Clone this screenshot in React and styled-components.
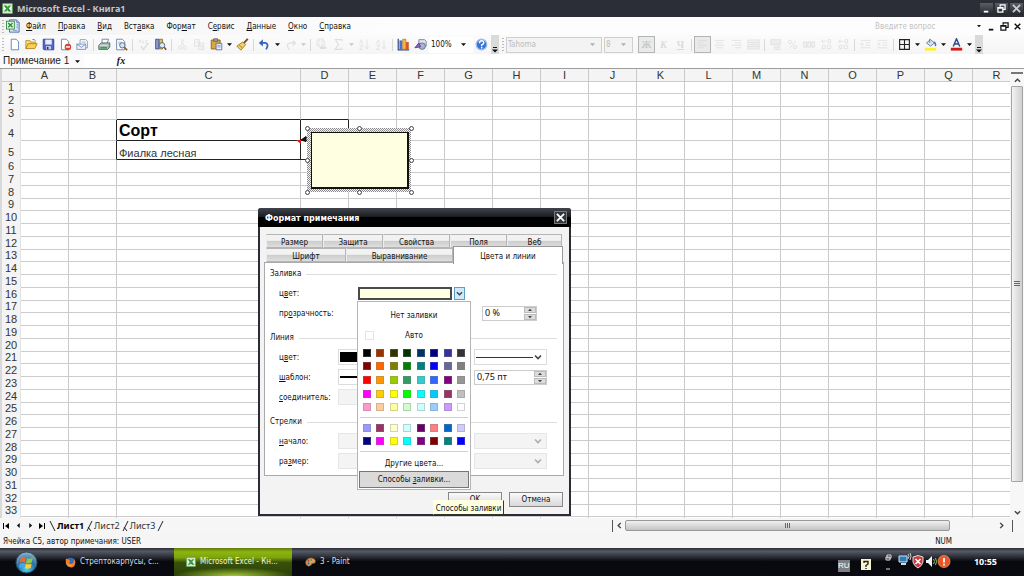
import React from "react";
import styled, { createGlobalStyle, css } from "styled-components";

const ui = `"DejaVu Sans Condensed", "DejaVu Sans", sans-serif`;
const caption = `"Noto Sans", "DejaVu Sans", sans-serif`;
const arial = `"Liberation Sans", Arial, sans-serif`;

const GlobalStyle = createGlobalStyle`
  *, *::before, *::after { box-sizing: border-box; }
  body { margin: 0; background: #fff; font: 8px/12px ${ui}; color: #111; }
  button, input, select { font: inherit; color: inherit; margin: 0; padding: 0; border: 0; background: none; border-radius: 0; outline: 0; }
  select { appearance: none; }
  svg { display: block; flex: none; }
`;

const Desktop = styled.div`
  display: flex;
  flex-direction: column;
  height: 100vh;
  overflow: hidden;
  position: relative;
`;

/* ---------- title, menu, toolbar ---------- */
const TitleBar = styled.header`
  display: flex;
  align-items: center;
  flex: none;
  height: 17px;
  padding: 0 1px 0 2px;
  gap: 4px;
  background: #2b2e37;
  color: #c3c5cb;
`;
const AppTitle = styled.h1`
  flex: 1;
  margin: 0;
  font: bold 9px/16px ${caption};
`;
const CaptionButton = styled.button`
  width: 13px;
  height: 12px;
  background: linear-gradient(#5b5e66, #23252c);
  display: grid;
  place-items: center;
  margin-left: -2px;
`;
const MenuBar = styled.nav`
  display: flex;
  align-items: center;
  flex: none;
  height: 18px;
  padding: 0 1px;
  gap: 12px;
  background: linear-gradient(90deg, #f3f3f3, #fdfdfd 40%);
`;
const MenuIcon = styled.span`
  display: flex;
  align-items: center;
  margin-right: -6px;
`;
const MenuItem = styled.button`
  padding-top: 2px;
  line-height: 16px;
`;
const Question = styled.input`
  width: 86px;
  margin-left: auto;
  padding-top: 2px;
  color: #333;
  &::placeholder { color: #c2c2c2; opacity: 1; }
`;
const DocButtons = styled.div`
  display: flex;
  align-items: center;
  gap: 2px;
  button { width: 11px; height: 11px; display: grid; place-items: center; }
`;
const ToolBar = styled.div`
  display: flex;
  align-items: center;
  flex: none;
  height: 19px;
  padding-left: 1px;
  background: linear-gradient(#fbfbfb, #f5f5f5);
`;
const Grip = styled.span`
  flex: none;
  width: 2px;
  height: 13px;
  margin: 0 2px 0 1px;
  background: repeating-linear-gradient(#bbb 0 1px, transparent 1px 3px);
`;
const ToolButton = styled.button`
  flex: none;
  width: 17px;
  height: 17px;
  display: grid;
  place-items: center;
  opacity: ${(p) => (p.$off ? 0.25 : 1)};
  ${(p) =>
    p.$pressed &&
    css`
      background: #e8eaeb;
      border: 1px solid #b4b4b4;
      svg { opacity: 0.2; }
    `}
`;
const ArrowButton = styled.button`
  flex: none;
  width: 9px;
  height: 17px;
  display: grid;
  place-items: center;
  opacity: ${(p) => (p.$off ? 0.2 : 1)};
`;
const Separator = styled.span`
  flex: none;
  width: 1px;
  height: 12px;
  margin: 0 2px;
  background: #d8d8d8;
`;
const BarEnd = styled.button`
  flex: none;
  width: 8px;
  height: 19px;
  margin: 0 2px 0 1px;
  background: #dadada;
  display: grid;
  place-items: end center;
`;
const Combo = styled.label`
  flex: none;
  display: grid;
  grid-template-columns: 1fr 11px;
  align-items: center;
  width: ${(p) => p.$w}px;
  height: 16px;
  margin-right: ${(p) => p.$after || 0}px;
  background: ${(p) => (p.$off ? "#f3f3f3" : "#fff")};
  border: 1px solid ${(p) => (p.$off ? "#cfcfcf" : "#fff")};
  color: ${(p) => (p.$off ? "#bdbdbd" : "#111")};
  select { grid-area: 1 / 1 / 2 / 3; padding: 1px 0 0 1px; opacity: 1; height: 14px; color: inherit; }
  svg { grid-area: 1 / 2; pointer-events: none; opacity: ${(p) => (p.$off ? 0.3 : 1)}; }
`;
const FormulaBar = styled.div`
  display: flex;
  align-items: center;
  flex: none;
  height: 14px;
  background: #fff;
  font: 10px/14px ${arial};
`;
const NameBox = styled.label`
  display: flex;
  align-items: center;
  width: 84px;
  gap: 3px;
  background: #fbfbfb;
  input { width: 72px; padding-left: 3px; color: #222; }
`;
const FxButton = styled.button`
  width: 20px;
  margin: 0 8px 0 27px;
  font: italic bold 10px/14px "Liberation Serif", serif;
`;
const FormulaInput = styled.input`
  flex: 1;
`;

/* ---------- sheet ---------- */
const SheetArea = styled.main`
  display: flex;
  flex: 1 1 0;
  min-height: 0;
  border-top: 1px solid #9c9c9c;
`;
const SheetView = styled.div`
  position: relative;
  flex: 1;
  min-width: 0;
  overflow: hidden;
  border-left: 2px solid #d9d9d9;
`;
const Sheet = styled.table`
  table-layout: fixed;
  width: 100%;
  border-collapse: separate;
  border-spacing: 0;
  font: 11px/12px ${arial};
  color: #333;
  th, td { padding: 0; border-right: 1px solid #c9c9c9; border-bottom: 1px solid #cbcbcb; white-space: nowrap; }
  th { background: #f4f4f4; font-weight: normal; text-align: center; }
  tbody th { border-right-color: #e2e2e2; border-bottom-color: #f4f4f4; }
`;
const Row = styled.tr`
  height: ${(p) => p.$h}px;
  th, td { height: ${(p) => p.$h}px; line-height: ${(p) => (p.$h > 13 ? 14 : p.$h - 1)}px; vertical-align: bottom; }
`;
const BoxCell = styled.td`
  && {
    border-right-color: #222;
    border-bottom-color: #222;
    padding-left: 2px;
    color: ${(p) => (p.$head ? "#000" : "#333")};
    font: ${(p) => (p.$head ? "bold 16px/18px" : "11px/12px")} ${arial};
  }
`;
const EdgeCell = styled.td`
  && {
    border-right-color: ${(p) => (p.$side ? "#222" : "#c9c9c9")};
    border-bottom-color: ${(p) => (p.$under ? "#222" : "#cbcbcb")};
  }
`;
const Note = styled.div`
  position: absolute;
  left: 305px;
  top: 59px;
  width: 104px;
  height: 64px;
  padding: 4px;
  background: repeating-conic-gradient(#8a8a8a 0 25%, #f4f4f4 0 50%) 0 0 / 2px 2px;
`;
const NoteText = styled.textarea`
  display: block;
  width: 98px;
  height: 57px;
  margin: 0;
  padding: 2px;
  resize: none;
  outline: 0;
  border: 1px solid #111;
  border-right-width: 2px;
  border-bottom-width: 2px;
  background: #ffffe1;
`;
const Handle = styled.span`
  position: absolute;
  left: ${(p) => p.$x};
  top: ${(p) => p.$y};
  width: 5px;
  height: 5px;
  margin: -2px;
  border: 1px solid #444;
  border-radius: 50%;
  background: #fff;
`;
const NoteLink = styled.svg`
  position: absolute;
  left: 293px;
  top: 66px;
`;
const VScroll = styled.div`
  flex: none;
  display: flex;
  flex-direction: column;
  align-items: center;
  width: 14px;
  padding-top: 3px;
  background: #f7f7f7;
  &::before { content: ""; width: 12px; height: 2px; background: #777; }
`;
const ScrollButton = styled.button`
  flex: none;
  width: 12px;
  height: 12px;
  display: grid;
  place-items: center;
`;
const VThumb = styled.button`
  flex: 1;
  width: 12px;
  margin-bottom: 24px;
  border: 1px solid #a5a5a5;
  border-radius: 1px;
  background: linear-gradient(90deg, #f3f3f3, #cfcfcf);
  display: grid;
  place-items: center;
`;
const TabStrip = styled.div`
  display: flex;
  align-items: center;
  flex: none;
  height: 15px;
  background: #f6f6f6;
`;
const SheetNav = styled.div`
  display: flex;
  button { width: 12px; height: 13px; display: grid; place-items: center; }
`;
const SheetTabs = styled.div`
  display: flex;
  align-items: center;
  flex: 1;
`;
const SheetTab = styled.button`
  font: ${(p) => (p.$on ? "bold" : "normal")} 9px/14px ${caption};
  color: ${(p) => (p.$on ? "#000" : "#333")};
`;
const HScroll = styled.div`
  display: flex;
  align-items: center;
  width: 401px;
  margin-right: 11px;
  padding-right: 5px;
  height: 12px;
  border-left: 1px solid #555;
  border-right: 1px solid #555;
`;
const HThumb = styled.button`
  width: 325px;
  height: 11px;
  margin-right: auto;
  border: 1px solid #999;
  border-radius: 2px;
  background: linear-gradient(#f0f0f0, #c4c4c4);
  display: grid;
  place-items: center;
`;
const StatusBar = styled.footer`
  display: flex;
  justify-content: space-between;
  flex: none;
  height: 15px;
  padding: 1px 72px 0 3px;
  line-height: 15px;
  background: #f5f5f5;
`;

/* ---------- taskbar ---------- */
const TaskBar = styled.div`
  display: flex;
  align-items: center;
  flex: none;
  height: 28px;
  background: linear-gradient(#2a2d35, #555963 12%, #23252d 36%, #08090d 48%, #0a0b12);
  color: #dcdde2;
`;
const StartButton = styled.button`
  width: 58px;
  padding-left: 15px;
`;
const Task = styled.button`
  display: flex;
  align-items: center;
  gap: 4px;
  width: ${(p) => p.$w}px;
  height: 28px;
  padding-left: ${(p) => p.$pad}px;
  white-space: nowrap;
  ${(p) =>
    p.$on &&
    css`
      color: #f2f6dc;
      background: radial-gradient(ellipse 50% 30% at 50% 100%, #a5c936, transparent),
        linear-gradient(#5f7a0c, #8db50f 14%, #7ea30d 34%, #38510a 52%, #2b4108);
    `}
`;
const Tray = styled.div`
  display: flex;
  align-items: center;
  margin-left: auto;
  padding-right: 27px;
`;
const Lang = styled.button`
  width: 12px;
  height: 12px;
  margin: 7px 11px 0 0;
  background: #7d7f85;
  color: #fff;
  font: 8px/12px ${arial};
`;
const Clock = styled.time`
  margin-left: 23px;
  color: #fff;
  font: bold 9px/12px ${caption};
`;

/* ---------- dialog ---------- */
const Dialog = styled.section`
  position: absolute;
  left: 258px;
  top: 208px;
  width: 313px;
  height: 308px;
  border: 2px solid #2b2d34;
  border-top: 0;
  border-radius: 3px 3px 0 0;
  background: #f3f3f3;
`;
const DialogTitle = styled.header`
  display: flex;
  align-items: center;
  justify-content: space-between;
  height: 19px;
  margin: 0 -2px;
  padding: 0 4px 0 7px;
  border-radius: 3px 3px 0 0;
  background: linear-gradient(#41444d, #1c1d21 45%, #000 50%);
  color: #fff;
  h2 { margin: 0; padding-top: 2px; font: bold 8px/18px "DejaVu Sans", sans-serif; }
`;
const CloseButton = styled.button`
  width: 13px;
  height: 13px;
  border: 1px solid #777;
  background: #34363d;
  display: grid;
  place-items: center;
`;
const TabRow = styled.div`
  display: flex;
  height: 14px;
  margin: 0 6px;
  &:first-of-type { margin-top: 7px; }
`;
const DialogTab = styled.button`
  width: ${(p) => p.$w}px;
  height: 14px;
  padding-top: 2px;
  line-height: 12px;
  border: 1px solid #b5b5b5;
  border-left-color: #eee;
  background: linear-gradient(#f2f2f2 45%, #cdcdcd 50%, #dedede);
  ${(p) =>
    p.$on &&
    css`
      height: 18px;
      margin-top: -2px;
      z-index: 1;
      border: 1px solid #999;
      border-bottom: 0;
      background: #fff;
      line-height: 15px;
    `}
`;
const Panel = styled.div`
  height: 214px;
  margin: 0 5px 0 4px;
  border: 1px solid #aaa;
  background: #fff;
`;
const Group = styled.fieldset`
  margin: 0 0 4px;
  padding: 0;
  border: 0;
`;
const Legend = styled.legend`
  display: flex;
  align-items: center;
  gap: 5px;
  width: 100%;
  height: 20px;
  padding: 2px 6px 0 5px;
  &::after { content: ""; flex: 1; height: 1px; background: #dcdcdc; }
`;
const FieldRow = styled.div`
  display: flex;
  align-items: center;
  height: 20px;
  padding: 0 16px 0 14px;
`;
const FieldLabel = styled.label`
  width: ${(p) => p.$w || 59}px;
  padding-top: 2px;
`;
const Drop = styled.span`
  display: grid;
  grid-template-columns: 1fr 12px;
  align-items: center;
  width: ${(p) => p.$w || 73}px;
  height: 16px;
  border: 1px solid ${(p) => (p.$off ? "#e6e6e6" : "#dcdcdc")};
  background: ${(p) => (p.$off ? "#f4f4f4" : "#fff")};
  margin-left: ${(p) => (p.$right ? "auto" : 0)};
  select { grid-area: 1 / 1 / 2 / 3; height: 14px; }
  svg { grid-area: 1 / 2; pointer-events: none; opacity: ${(p) => (p.$off ? 0.4 : 1)}; }
`;
const Stroke = styled.span`
  grid-area: 1 / 1;
  height: ${(p) => p.$h}px;
  margin: 0 1px;
  background: ${(p) => p.$c || "#000"};
  pointer-events: none;
`;
const FillDrop = styled.button`
  display: grid;
  grid-template-columns: 94px 11px;
  gap: 2px;
  height: 13px;
`;
const FillSwatch = styled.span`
  height: 13px;
  border: 2px solid #4a4a4a;
  background: #ffffe1;
`;
const FillArrow = styled.span`
  height: 13px;
  border: 1px solid #5f9cc4;
  background: #cfe9f8;
  display: grid;
  place-items: center;
`;
const Spin = styled.span`
  display: flex;
  align-items: center;
  width: ${(p) => p.$w}px;
  height: 15px;
  margin: 0 ${(p) => p.$gap || 0}px 0 auto;
  border: 1px solid #ccc;
  background: #fff;
  font: 9px/12px ${caption};
  input { flex: 1; width: 20px; min-width: 0; padding-left: 2px; }
`;
const SpinButtons = styled.span`
  display: grid;
  gap: 1px;
  button { width: 12px; height: 6px; background: #dcdcdc; border: 1px solid #bbb; display: grid; place-items: center; }
`;
const Buttons = styled.div`
  display: flex;
  justify-content: flex-end;
  gap: 7px;
  margin: 16px 6px 0;
`;
const PushButton = styled.button`
  width: 54px;
  height: 15px;
  border: 1px solid #888;
  background: linear-gradient(#fafafa, #e9e9e9 50%, #d9d9d9);
  padding-top: 1px;
  line-height: 12px;
`;
const Popup = styled.div`
  position: absolute;
  left: 357px;
  top: 301px;
  width: 114px;
  height: 189px;
  display: flex;
  flex-direction: column;
  padding: 3px 1px 0;
  border: 1px solid #b5b5b5;
  background: #fff;
`;
const PopupItem = styled.button`
  height: ${(p) => p.$h}px;
  padding-top: 1px;
  text-align: center;
  ${(p) =>
    p.$on &&
    css`
      border: 1px solid #777;
      background: #dadada;
    `}
`;
const AutoItem = styled(PopupItem)`
  display: grid;
  grid-template-columns: 8px 1fr 8px;
  align-items: center;
  padding: 0 6px;
`;
const AutoSwatch = styled.span`
  width: 9px;
  height: 9px;
  border: 1px solid #e4e4e4;
`;
const Palette = styled.div`
  display: grid;
  grid-template-columns: repeat(8, 1fr);
  grid-auto-rows: 1fr;
  place-items: center;
  height: ${(p) => p.$h}px;
  margin: 0 1px;
`;
const Swatch = styled.button`
  width: 8px;
  height: 8px;
  border: 1px solid rgba(128, 128, 128, 0.35);
  background: ${(p) => p.$c};
`;
const Rule = styled.hr`
  width: 108px;
  height: 1px;
  margin: 3px auto;
  border: 0;
  background: #d0d0d0;
`;
const Tooltip = styled.div`
  position: absolute;
  left: 433px;
  top: 500px;
  width: 71px;
  height: 15px;
  padding-top: 1px;
  text-align: center;
  line-height: 14px;
  white-space: nowrap;
  border: 1px solid #ffffe1;
  border-right-color: #333;
  border-bottom-color: #333;
  background: #ffffe1;
`;

/* ---------- drawings ---------- */
const Tri = ({ dir = "down", s = 5, c = "#111" }) => (
  <svg width={s} height={s} viewBox="0 0 6 6">
    <path d={{ down: "M0 1.5h6L3 4.8z", left: "M4.5 0v6L1 3z", right: "M1.5 0v6L5 3z", up: "M0 4.5h6L3 1.2z" }[dir]} fill={c} />
  </svg>
);
const Chevron = ({ dir = "down", c = "#444", w = 8 }) => (
  <svg width={w} height={w} viewBox="0 0 8 8" fill="none" stroke={c} strokeWidth="1.6">
    <path d={{ down: "M1 2.5l3 3 3-3", up: "M1 5.5l3-3 3 3", left: "M5.5 1l-3 3 3 3", right: "M2.5 1l3 3-3 3" }[dir]} />
  </svg>
);
const CrossIcon = ({ c = "#fff", s = 9 }) => (
  <svg width={s} height={s} viewBox="0 0 10 10" stroke={c} strokeWidth="2"><path d="M1 1l8 8M9 1L1 9" /></svg>
);
const RestoreIcon = ({ c = "#fff" }) => (
  <svg width="9" height="9" viewBox="0 0 10 10" fill="none" stroke={c} strokeWidth="1.4"><path d="M3.5 3V1h5.5v5H7M1 4h5.5v5H1zM1 4.6h5" /></svg>
);
const MinIcon = ({ c = "#fff" }) => (
  <svg width="9" height="9" viewBox="0 0 10 10"><path d="M2 7.5h5v2H2z" fill={c} /></svg>
);
const ExcelIcon = ({ s = 12 }) => (
  <svg width={s} height={s} viewBox="0 0 16 16">
    <rect x=".5" y=".5" width="15" height="15" rx="1.5" fill="#d3ebca" stroke="#3b8b3d" />
    <path d="M3 3.500h10v9H3z" fill="#fff" /><path d="M2.500 3.500h4l7 9h-4z" fill="#2a8d36" /><path d="M13.500 3.500h-4l-7 9h4z" fill="#3f9f3e" />
  </svg>
);
const BookIcon = () => (
  <svg width="14" height="14" viewBox="0 0 16 16">
    <path d="M4 1h8l3 3v11H4z" fill="#dfe8fb" stroke="#3f5fa5" /><path d="M12 1v3h3M12 6h2M12 8h2M12 10h2M8 13h5" fill="none" stroke="#7590c8" />
    <rect x=".5" y="2.500" width="9" height="9" fill="#e9f5e4" stroke="#31863a" /><path d="M2.500 4.500l5 5M7.500 4.500l-5 5" stroke="#2b9138" strokeWidth="1.7" />
  </svg>
);
const G = "#9a9a9a";
const art = {
  new: <path d="M4 1.500h6l3 3v10H4z" fill="#fff" stroke="#5573a8" />,
  open: <><path d="M1 13V3h5l1 2h6v2" fill="#f8d775" stroke="#b98a20" /><path d="M1 13l3-6h11l-3 6z" fill="#fbd24c" stroke="#a8781c" /><path d="M9 2q3-1.500 4 2" fill="none" stroke="#4b78c4" /></>,
  save: <><path d="M1.500 1.500h13v13h-12l-1-1z" fill="#5366c4" stroke="#28368c" /><path d="M4 2h8v6H4z" fill="#e8ecfb" /><path d="M5 10h6v4H5z" fill="#c9d0ee" /><path d="M6 11h2v3H6z" fill="#222f80" /></>,
  perm: <><path d="M3 1.500h6l3 3v10H3z" fill="#fff" stroke="#5573a8" /><circle cx="11" cy="11" r="4" fill="#d8422d" /><path d="M8.500 11h5" stroke="#fff" strokeWidth="1.800" /></>,
  mail: <><path d="M5 2h7l2 2v8H5z" fill="#fff" stroke="#7a8fb9" /><path d="M1 7.500h11v6.500H1z" fill="#edf2fb" stroke="#6d86b8" /><path d="M1 7.500l5.500 4 5.500-4" fill="none" stroke="#6d86b8" /><path d="M7 5h5" stroke="#8da2c9" /></>,
  print: <><path d="M5 6V1.500h8L11.500 6" fill="#fff" stroke="#5573a8" /><path d="M1 9l3-3h10.500v5l-2.500 3H1z" fill="#a6bbb0" stroke="#3a5c55" /><path d="M3 12h8" stroke="#35a04b" strokeWidth="2" /><path d="M2 9h10" stroke="#e8f0ec" /></>,
  preview: <><path d="M2 1.500h7l3 3v10H2z" fill="#fff" stroke="#5573a8" /><path d="M4 5h4M4 7h3" stroke="#9ab" /><circle cx="9" cy="9" r="3.300" fill="#cfe7f7" stroke="#47556e" /><path d="M11.500 11.500l3.500 3.500" stroke="#8d5f34" strokeWidth="2" /></>,
  spell: <><path d="M2 6l1.500-4L5 6M7 2v4h2M13 3h-2v3h2" fill="none" stroke={G} /><path d="M5 10l3 4 6-8" fill="none" stroke={G} strokeWidth="2" /></>,
  research: <><path d="M2 1.500h4v12H2z" fill="#8a9bd4" stroke="#3a458c" /><path d="M6.500 1.500h4v12h-4z" fill="#d8bf72" stroke="#7e672a" /><circle cx="10" cy="9" r="3.300" fill="#d8ecf7" stroke="#47556e" /><path d="M12.500 11.500l2.500 3" stroke="#70502d" strokeWidth="2" /></>,
  cut: <><path d="M6 1l4 9M10 1L6 10" stroke={G} /><circle cx="5" cy="12" r="2" fill="none" stroke={G} /><circle cx="11" cy="12" r="2" fill="none" stroke={G} /></>,
  copy: <path d="M2 2h6v8H2zM7 6h6v8H7zM4 5h3M9 9h3M9 11h3" fill="#eee" stroke={G} />,
  paste: <><path d="M1.500 2.500h11v11h-11z" fill="#dba83b" stroke="#80581a" /><path d="M4.500 1h5v3h-5z" fill="#aaa" stroke="#555" /><path d="M7.500 6.500h7v8h-7z" fill="#eef4ff" stroke="#4a64a0" /><path d="M9 9h4M9 11h4" stroke="#7089bd" /></>,
  brush: <><path d="M14.500 1L9 7" stroke="#70502d" strokeWidth="2.400" /><path d="M8 5l4 3-6 7-5-5z" fill="#f0cf65" stroke="#94741e" /><path d="M4 9l4 3" stroke="#94741e" /></>,
  undo: <><path d="M3 6h6q5 1 1 8" fill="none" stroke="#3263c5" strokeWidth="2.200" /><path d="M1 6l5-4.500v9z" fill="#3263c5" /></>,
  redo: <><path d="M13 6H7q-5 1-1 8" fill="none" stroke={G} strokeWidth="1.500" /><path d="M15 6l-4-4v8z" fill={G} /></>,
  link: <><circle cx="7" cy="6" r="5" fill="#ccc" stroke={G} /><path d="M2 6h10M7 1v10" stroke="#fff" /><path d="M6 12h8" stroke={G} strokeWidth="3" /></>,
  sum: <path d="M12 4V2H4l4 6-4 6h8v-2" fill="none" stroke={G} strokeWidth="1.500" />,
  sort: <><path d="M2 7l2-5 2 5M2 9h4l-4 5h4" fill="none" stroke={G} /><path d="M11 2v11M9 10.500l2 3 2-3" fill="none" stroke={G} /></>,
  chart: <><path d="M1.500 1v13.500H15" fill="none" stroke="#334b82" strokeWidth="1.500" /><path d="M3 3h3.500v11H3z" fill="#4a6fd2" /><path d="M7 1.500h4V14H7z" fill="#f2bd35" stroke="#996c14" strokeWidth=".7" /><path d="M11 5h3.500v9H11z" fill="#d2552f" /></>,
  draw: <><path d="M6 2h7l2 2v6H6z" fill="#dfe4ee" stroke="#69789d" /><circle cx="10" cy="10" r="4" fill="#a7b5c5" stroke="#596b86" /><path d="M1 12l5-6 2 5z" fill="#8a62c0" stroke="#5a3b91" /></>,
  help: <><circle cx="8" cy="8" r="6.500" fill="#3873d3" stroke="#9bbdf0" strokeWidth="1.500" /><path d="M5.500 6.500q0-3 2.700-3t2.500 2.500q0 1.200-2.500 2.500v1.500M8.200 11v2" fill="none" stroke="#fff" strokeWidth="1.800" /></>,
  left: <path d="M2 3h11M2 6h7M2 9h11M2 12h7" stroke={G} />,
  center: <path d="M2 3h12M4 6h8M2 9h12M4 12h8" stroke={G} />,
  right: <path d="M2 3h12M6 6h8M2 9h12M6 12h8" stroke={G} />,
  merge: <path d="M1 2.500h14v11H1zM1 5.500h14M1 10.500h14M3 8h3M13 8h-3M6 8h4" fill="#ddd" stroke={G} />,
  money: <><path d="M2 2h12v6H2z" fill="#ccc" stroke={G} /><path d="M6 10h8M6 12h8M6 14h8" stroke={G} /></>,
  percent: <><circle cx="5" cy="5" r="2" fill="none" stroke={G} /><circle cx="11" cy="11" r="2" fill="none" stroke={G} /><path d="M12 3L4 13" stroke={G} /></>,
  thousand: <path d="M1 5h3v6H1zM6 5h3v6H6zM11 5h3v6h-3z" fill="none" stroke={G} strokeWidth="1.300" />,
  decimal: <><path d="M2 4h6M4 2L2 4l2 2M10 2h3v4h-3zM3 9h3v4H3zM9 9h4v4H9z" fill="none" stroke={G} /></>,
  indent: <path d="M2 3h12M8 6h6M8 9h6M2 12h12M6 7.500H2l2-2M2 7.500l2 2" fill="none" stroke={G} />,
  borders: <path d="M2 2h12v12H2zM8 2v12M2 8h12" fill="none" stroke="#222" strokeWidth="1.400" />,
  fill: <><path d="M3 6l5-4 5 4-5 4z" fill="#d9e6f2" stroke="#5a6c86" /><path d="M7 1v5" stroke="#5a6c86" /><path d="M12 5q3 1 2 5" fill="none" stroke="#3f76bd" strokeWidth="1.800" /><path d="M1 12h14v3.500H1z" fill="#fbf22c" /></>,
  color: <><path d="M4 10.500L8 1l4 9.500M5.500 7.500h5" fill="none" stroke="#2d4a86" strokeWidth="1.800" /><path d="M1 12h14v3.500H1z" fill="#d01c1c" /></>,
};
const Art = ({ k }) => <svg width="13" height="13" viewBox="0 0 16 16">{art[k]}</svg>;
const Tool = ({ k, label, ...rest }) => (
  <ToolButton aria-label={label || k} {...rest}><Art k={k} /></ToolButton>
);
const Arrow = ({ off }) => <ArrowButton $off={off} aria-label="Список"><Tri /></ArrowButton>;
const Glyph = styled.span`
  font: ${(p) => (p.$i ? "italic " : "")}bold 10px/14px "Liberation Serif", serif;
  text-decoration: ${(p) => (p.$u ? "underline" : "none")};
  color: ${(p) => (p.$c || "#888")};
`;
const End = () => (
  <BarEnd aria-label="Параметры панели">
    <svg width="6" height="8" viewBox="0 0 6 8"><path d="M1 1h4v1H1zM0 3.500h6L3 6.500z" fill="#111" /></svg>
  </BarEnd>
);
const Spinner = () => (
  <SpinButtons>
    <button aria-label="Больше"><Tri dir="up" s={4} c="#444" /></button>
    <button aria-label="Меньше"><Tri s={4} c="#444" /></button>
  </SpinButtons>
);

/* ---------- data ---------- */
const menus = [["", "Ф", "айл"], ["", "П", "равка"], ["", "В", "ид"], ["Вст", "а", "вка"], ["Фор", "м", "ат"], ["С", "е", "рвис"], ["", "Д", "анные"], ["", "О", "кно"], ["", "С", "правка"]];
const columns = "ABCDEFGHIJKLMNOPQR".split("");
const rowNumbers = Array.from({ length: 34 }, (_, i) => i + 1);
const rowHeight = (n) => {
  if (n === 4) return 21;
  if (n === 5) return 19;
  return n % 4 === 1 ? 12 : 13;
};
const palette = "#000000 #993300 #333300 #003300 #003366 #000080 #333399 #333333 #800000 #ff6600 #808000 #008000 #008080 #0000ff #666699 #808080 #ff0000 #ff9900 #99cc00 #339966 #33cccc #3366ff #800080 #969696 #ff00ff #ffcc00 #ffff00 #00ff00 #00ffff #00ccff #993366 #c0c0c0 #ff99cc #ffcc99 #ffff99 #ccffcc #ccffff #99ccff #cc99ff #ffffff".split(" ");
const chartColors = "#9999ff #993366 #ffffcc #ccffff #660066 #ff8080 #0066cc #ccccff #000080 #ff00ff #ffff00 #00ffff #800080 #800000 #008080 #0000ff".split(" ");
const handles = [[0, 0], [50, 0], [100, 0], [0, 50], [100, 50], [0, 100], [50, 100], [100, 100]];

function Cell({ row, col }) {
  if (col === "C" && row === 4) return <BoxCell $head>Сорт</BoxCell>;
  if (col === "C" && row === 5) return <BoxCell>Фиалка лесная</BoxCell>;
  if ((col === "C" || col === "D") && row === 3) return <EdgeCell $under />;
  if (col === "B" && (row === 4 || row === 5)) return <EdgeCell $side />;
  if (col === "D" && row === 4) return <EdgeCell $side $under />;
  if (col === "D" && row === 5) return <EdgeCell $side $under />;
  return <td />;
}

function Toolbar() {
  return (
    <ToolBar role="toolbar">
      <Grip />
      <Tool k="new" label="Создать" /><Tool k="open" label="Открыть" /><Tool k="save" label="Сохранить" /><Tool k="perm" /><Tool k="mail" />
      <Separator /><Tool k="print" label="Печать" /><Tool k="preview" />
      <Separator /><Tool k="spell" $off /><Tool k="research" />
      <Separator /><Tool k="cut" $off /><Tool k="copy" $off /><Tool k="paste" /><Arrow /><Tool k="brush" />
      <Separator /><Tool k="undo" /><Arrow /><Tool k="redo" $off /><Arrow off />
      <Separator /><Tool k="link" $off /><Tool k="sum" $off /><Arrow off /><Tool k="sort" $off /><Tool k="sort" $off />
      <Separator /><Tool k="chart" /><Tool k="draw" />
      <Combo $w={44}><select aria-label="Масштаб"><option>100%</option></select><Tri /></Combo>
      <Tool k="help" label="Справка" />
      <End />
      <Grip />
      <Combo $w={96} $off $after={2}><select aria-label="Шрифт"><option>Tahoma</option></select><Tri /></Combo>
      <Combo $w={29} $off $after={5}><select aria-label="Размер"><option>8</option></select><Tri /></Combo>
      <ToolButton $pressed><Glyph $c="#c8c8c8">Ж</Glyph></ToolButton>
      <ToolButton $off><Glyph $i>К</Glyph></ToolButton>
      <ToolButton $off><Glyph $u>Ч</Glyph></ToolButton>
      <Separator /><Tool k="left" $pressed /><Tool k="center" $off /><Tool k="right" $off /><Tool k="merge" $off />
      <Separator /><Tool k="money" $off /><Tool k="percent" $off /><Tool k="thousand" $off /><Tool k="decimal" $off /><Tool k="decimal" $off />
      <Separator /><Tool k="indent" $off /><Tool k="indent" $off />
      <Separator /><Tool k="borders" /><Arrow /><Tool k="fill" /><Arrow /><Tool k="color" /><Arrow />
      <End />
    </ToolBar>
  );
}

function NoteDialog() {
  return (
    <Dialog role="dialog" aria-labelledby="dlg-title">
      <DialogTitle>
        <h2 id="dlg-title">Формат примечания</h2>
        <CloseButton aria-label="Закрыть"><CrossIcon /></CloseButton>
      </DialogTitle>
      <TabRow>
        <DialogTab $w={57}>Размер</DialogTab><DialogTab $w={60}>Защита</DialogTab><DialogTab $w={67}>Свойства</DialogTab>
        <DialogTab $w={57}>Поля</DialogTab><DialogTab $w={55}>Веб</DialogTab>
      </TabRow>
      <TabRow>
        <DialogTab $w={80}>Шрифт</DialogTab><DialogTab $w={107}>Выравнивание</DialogTab><DialogTab $w={110} $on>Цвета и линии</DialogTab>
      </TabRow>
      <Panel>
        <Group>
          <Legend>Заливка</Legend>
          <FieldRow>
            <FieldLabel $w={79} htmlFor="fill">ц<u>в</u>ет:</FieldLabel>
            <FillDrop id="fill"><FillSwatch /><FillArrow><Chevron w={7} /></FillArrow></FillDrop>
          </FieldRow>
          <FieldRow>
            <FieldLabel htmlFor="alpha">пр<u>о</u>зрачность:</FieldLabel>
            <Spin $w={55} $gap={10}><input id="alpha" defaultValue="0 %" /><Spinner /></Spin>
          </FieldRow>
        </Group>
        <Group>
          <Legend>Линия</Legend>
          <FieldRow>
            <FieldLabel htmlFor="lc">ц<u>в</u>ет:</FieldLabel>
            <Drop><select id="lc" /><Stroke $h={10} /><Chevron /></Drop>
            <Drop $right><select aria-label="тип" /><Stroke $h={1} $c="#333" /><Chevron /></Drop>
          </FieldRow>
          <FieldRow>
            <FieldLabel htmlFor="lp"><u>ш</u>аблон:</FieldLabel>
            <Drop><select id="lp" /><Stroke $h={2} /><Chevron /></Drop>
            <Spin $w={73}><input aria-label="толщина" defaultValue="0,75 пт" /><Spinner /></Spin>
          </FieldRow>
          <FieldRow>
            <FieldLabel htmlFor="cn"><u>с</u>оединитель:</FieldLabel>
            <Drop $off><select id="cn" disabled /><Chevron /></Drop>
          </FieldRow>
        </Group>
        <Group>
          <Legend>Стрелки</Legend>
          <FieldRow>
            <FieldLabel htmlFor="ab"><u>н</u>ачало:</FieldLabel>
            <Drop $off><select id="ab" disabled /><Chevron /></Drop>
            <Drop $off $right><select aria-label="конец" disabled /><Chevron /></Drop>
          </FieldRow>
          <FieldRow>
            <FieldLabel htmlFor="as">ра<u>з</u>мер:</FieldLabel>
            <Drop $off><select id="as" disabled /><Chevron /></Drop>
            <Drop $off $right><select aria-label="размер конца" disabled /><Chevron /></Drop>
          </FieldRow>
        </Group>
      </Panel>
      <Buttons><PushButton>OK</PushButton><PushButton>Отмена</PushButton></Buttons>
    </Dialog>
  );
}

export default function App() {
  return (
    <Desktop>
      <GlobalStyle />
      <TitleBar>
        <ExcelIcon s={11} />
        <AppTitle>Microsoft Excel - Книга1</AppTitle>
        <CaptionButton aria-label="Свернуть"><MinIcon /></CaptionButton>
        <CaptionButton aria-label="Восстановить"><RestoreIcon /></CaptionButton>
        <CaptionButton aria-label="Закрыть"><CrossIcon c="#ccc" /></CaptionButton>
      </TitleBar>
      <MenuBar>
        <MenuIcon><Grip /><BookIcon /></MenuIcon>
        {menus.map(([a, b, c]) => <MenuItem key={a + b + c}>{a}<u>{b}</u>{c}</MenuItem>)}
        <Question placeholder="Введите вопрос" aria-label="Введите вопрос" />
        <DocButtons>
          <button aria-label="Список"><Tri s={4} /></button>
          <button aria-label="Свернуть книгу"><MinIcon c="#111" /></button>
          <button aria-label="Восстановить книгу"><RestoreIcon c="#111" /></button>
          <button aria-label="Закрыть книгу"><CrossIcon c="#111" s={7} /></button>
        </DocButtons>
      </MenuBar>
      <Toolbar />
      <FormulaBar>
        <NameBox><input aria-label="Имя" defaultValue="Примечание 1" /><Tri /></NameBox>
        <FxButton>fx</FxButton>
        <FormulaInput aria-label="Строка формул" />
      </FormulaBar>
      <SheetArea>
        <SheetView>
          <Sheet>
            <colgroup>
              <col style={{ width: 19 }} />
              {columns.map((c) => <col key={c} style={{ width: c === "C" ? 184 : 48 }} />)}
              <col />
            </colgroup>
            <thead><Row $h={13}><th />{columns.map((c) => <th key={c}>{c}</th>)}<th /></Row></thead>
            <tbody>
              {rowNumbers.map((n) => (
                <Row key={n} $h={rowHeight(n)}>
                  <th>{n}</th>
                  {columns.map((c) => <Cell key={c} row={n} col={c} />)}
                  <td />
                </Row>
              ))}
            </tbody>
          </Sheet>
          <NoteLink width="16" height="10" viewBox="0 0 16 10">
            <path d="M1 5h5v4z" fill="#e01515" /><path d="M14 2L8 4M6 5l5-3.500v5z" fill="#111" stroke="#111" />
          </NoteLink>
          <Note>
            <NoteText aria-label="Примечание" />
            {handles.map(([x, y]) => <Handle key={`${x}-${y}`} $x={`${x}%`} $y={`${y}%`} />)}
          </Note>
        </SheetView>
        <VScroll>
          <ScrollButton aria-label="Вверх"><Chevron dir="up" w={7} /></ScrollButton>
          <VThumb aria-label="Прокрутка"><svg width="6" height="6"><path d="M0 .5h6M0 2.500h6M0 4.500h6" stroke="#666" /></svg></VThumb>
          <ScrollButton aria-label="Вниз"><Chevron w={7} /></ScrollButton>
        </VScroll>
      </SheetArea>
      <TabStrip>
        <SheetNav>
          <button aria-label="Первый"><svg width="7" height="6"><path d="M0 0h1v6H0zM6 0v6L2 3z" /></svg></button>
          <button aria-label="Назад"><Tri dir="left" /></button>
          <button aria-label="Вперед"><Tri dir="right" /></button>
          <button aria-label="Последний"><svg width="7" height="6"><path d="M5 0h1v6H5zM0 0v6l4-3z" /></svg></button>
        </SheetNav>
        <SheetTabs>
          <svg width="9" height="12"><path d="M2 1l5 10" stroke="#222" /></svg>
          <SheetTab $on>Лист1</SheetTab>
          <svg width="10" height="12" fill="none"><path d="M3 11L8 1M4 7l3 4" stroke="#222" /></svg>
          <SheetTab>Лист2</SheetTab>
          <svg width="10" height="12" fill="none"><path d="M3 11L8 1M4 7l3 4" stroke="#222" /></svg>
          <SheetTab>Лист3</SheetTab>
          <svg width="10" height="12"><path d="M3 11L8 1" stroke="#222" /></svg>
        </SheetTabs>
        <HScroll>
          <ScrollButton aria-label="Влево"><Chevron dir="left" w={7} /></ScrollButton>
          <HThumb aria-label="Прокрутка по горизонтали"><svg width="6" height="5"><path d="M.5 0v5M2.500 0v5M4.500 0v5" stroke="#666" /></svg></HThumb>
          <ScrollButton aria-label="Вправо"><Chevron dir="right" w={7} /></ScrollButton>
        </HScroll>
      </TabStrip>
      <StatusBar><span>Ячейка C5, автор примечания: USER</span><span>NUM</span></StatusBar>
      <TaskBar>
        <StartButton aria-label="Пуск">
          <svg width="23" height="23" viewBox="0 0 24 24">
            <defs><radialGradient id="orb" cx=".5" cy=".8" r=".8"><stop offset="0" stopColor="#55d3f2" /><stop offset=".5" stopColor="#2272a8" /><stop offset="1" stopColor="#9bb5c6" /></radialGradient></defs>
            <circle cx="12" cy="12" r="11" fill="url(#orb)" stroke="#24475f" />
            <path d="M6 7.500q3-2 5.500-.5l-1 5q-2.500-1.300-5.500.3z" fill="#f0652c" /><path d="M12.500 7.300q3 1.500 6-.3l-1 5q-3 1.500-6 .3z" fill="#8fc742" />
            <path d="M4.800 13.300q3-1.500 5.500-.2l-1 4.500q-2.500-1.200-5 .2z" fill="#46a5e8" /><path d="M11.300 13.200q3 1.500 6 0l-1 4.600q-3 1.500-6 0z" fill="#fccb35" />
          </svg>
        </StartButton>
        <Task $w={116} $pad={7}>
          <svg width="11" height="11" viewBox="0 0 16 16"><circle cx="8" cy="8" r="7" fill="#3568b8" /><path d="M1 4q0 10 7 11t7-8q-1-4-3-5 2 4-1 7-4 2-5-1l2-2q-3-3-6-4z" fill="#f07f1d" /><path d="M2 9q3 5 8 3" fill="none" stroke="#fbc343" /></svg>
          <span>Стрептокарпусы, с...</span>
        </Task>
        <Task $w={118} $pad={12} $on><ExcelIcon s={10} /><span>Microsoft Excel - Кн...</span></Task>
        <Task $w={100} $pad={13}>
          <svg width="11" height="10" viewBox="0 0 16 14"><path d="M1 8q0-6 8-7 7 1 6 6-1 3-5 2-1 4-5 4-4-1-4-5z" fill="#d9a35a" stroke="#8b5a24" /><circle cx="5" cy="5" r="1.500" fill="#d33" /><circle cx="9" cy="4" r="1.500" fill="#3a7" /><circle cx="5" cy="9" r="1.500" fill="#36c" /></svg>
          <span>3 - Paint</span>
        </Task>
        <Tray>
          <Lang>RU</Lang>
          <svg width="51" height="20" viewBox="0 0 51 20">
            <path d="M0 7h10v11H0z" fill="#f8f5ce" /><path d="M3 11V9.500h4V12L5 13.500V15M5 16v1" fill="none" stroke="#222" strokeWidth="1.400" />
            <path d="M26 3h4v3h-4zM25 5h4v3h-4z" fill="#222" stroke="#ddd" /><path d="M25 17h4" stroke="#ddd" />
            <path d="M38 4h8v6h-8z" fill="#257ec0" stroke="#cfe6f5" /><path d="M40 12h5" stroke="#cde" strokeWidth="2" /><path d="M47 2q2 2 0 5M49 1q2 3 0 7" fill="none" stroke="#ccc" />
          </svg>
          <svg width="39" height="14" viewBox="0 0 39 14">
            <path d="M1 2l5-1.500L11 2v5q-1 4-5 6Q2 11 1 7z" fill="#cc3b3b" stroke="#ddd" /><path d="M3.500 4l5 5M8.500 4l-5 5" stroke="#fff" strokeWidth="1.500" />
            <path d="M14 5h2l4-4v11l-4-4h-2z" fill="#f3f3f3" /><path d="M21.500 4q2 2.500 0 5M23.500 3q2 3.500 0 7" fill="none" stroke="#8ec56c" />
            <circle cx="32" cy="6.500" r="6" fill="#ee5522" stroke="#f7a27c" strokeWidth=".7" /><path d="M32 3v4.500M32 8.800v1.700" stroke="#fff" strokeWidth="1.800" />
          </svg>
          <Clock>10:55</Clock>
        </Tray>
      </TaskBar>
      <NoteDialog />
      <Popup role="menu">
        <PopupItem $h={20}>Нет заливки</PopupItem>
        <AutoItem $h={21}><AutoSwatch />Авто</AutoItem>
        <Palette $h={68}>{palette.map((c) => <Swatch key={c} $c={c} aria-label={c} />)}</Palette>
        <Rule />
        <Palette $h={27}>{chartColors.map((c) => <Swatch key={c} $c={c} aria-label={c} />)}</Palette>
        <Rule />
        <PopupItem $h={16}><u>Д</u>ругие цвета...</PopupItem>
        <PopupItem $h={17} $on>Способы <u>з</u>аливки...</PopupItem>
      </Popup>
      <Tooltip role="tooltip">Способы заливки</Tooltip>
    </Desktop>
  );
}
